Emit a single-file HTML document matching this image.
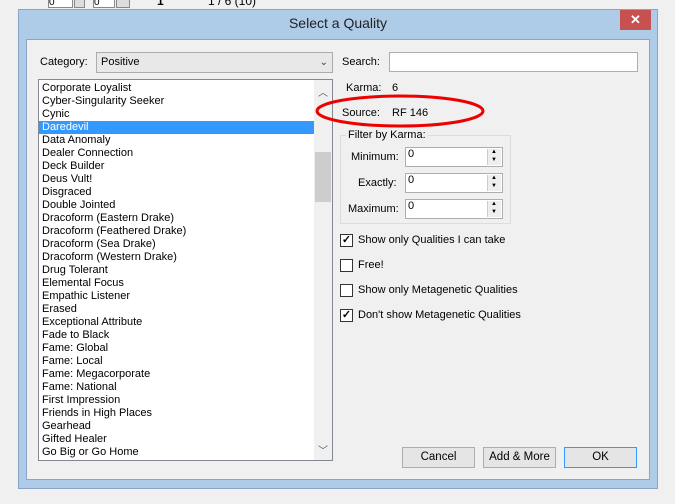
<!DOCTYPE html>
<html><head><style>
*{margin:0;padding:0;box-sizing:border-box}
body{width:675px;height:504px;background:#f0f0f0;font-family:"Liberation Sans",sans-serif;font-size:11px;color:#000;position:relative;overflow:hidden}
.a{position:absolute}
.list div{height:13px;line-height:13px;padding-left:3px;white-space:nowrap;font-size:11px}
.sel{background:#3399ff;color:#fff}
.tb{background:#fff;border:1px solid #abadb3}
.spin{position:absolute;right:1px;top:1px;width:14px;height:16px;background:#eee;border-left:1px solid #ccc}
.spin:before{content:"▲";position:absolute;left:3px;top:0;font-size:6px}
.spin:after{content:"▼";position:absolute;left:3px;top:8px;font-size:6px}
.cb{position:absolute;width:13px;height:13px;border:1px solid #333;background:#fff;font-size:11px;line-height:11px;text-align:center;font-weight:bold}
.btn{position:absolute;height:21px;background:#e5e5e5;border:1px solid #adadad;text-align:center;line-height:19px;font-size:11.5px}
</style></head><body>
<div class="a" style="left:48px;top:0;width:25px;height:8px;background:#fff;border:1px solid #888;border-top:none;font-size:10px;line-height:6px">0</div>
<div class="a" style="left:74px;top:0;width:11px;height:8px;background:#ddd;border:1px solid #888;border-top:none"></div>
<div class="a" style="left:93px;top:0;width:22px;height:8px;background:#fff;border:1px solid #888;border-top:none;font-size:10px;line-height:6px">0</div>
<div class="a" style="left:116px;top:0;width:14px;height:8px;background:#ddd;border:1px solid #888;border-top:none"></div>
<div class="a" style="left:157px;top:-6px;font-weight:bold;font-size:12px">1</div>
<div class="a" style="left:208px;top:-6px;font-size:12px">1 / 6 (10)</div>
<div class="a" style="left:18px;top:9px;width:640px;height:480px;background:#aecbe7;border:1px solid #8aa6c6"></div>
<div class="a" style="left:26px;top:39px;width:624px;height:441px;background:#f0f0f0;border:1px solid #8aa6c6"></div>
<div class="a" style="left:18px;top:15px;width:640px;text-align:center;font-size:14px;color:#222">Select a Quality</div>
<div class="a" style="left:620px;top:10px;width:31px;height:20px;background:#c75050;color:#fff;text-align:center;line-height:19px;font-size:13px;font-weight:bold">✕</div>
<div class="a" style="left:40px;top:56px">Category:</div>
<div class="a" style="left:96px;top:52px;width:237px;height:21px;background:#e8e8e8;border:1px solid #acacac;padding-left:4px;line-height:19px">Positive<span style="position:absolute;right:4px;top:0;font-size:10px;color:#444">⌄</span></div>
<div class="a" style="left:38px;top:79px;width:295px;height:382px;background:#fff;border:1px solid #828790"></div>
<div class="a list" style="left:39px;top:82px;width:276px">
<div>Corporate Loyalist</div><div>Cyber-Singularity Seeker</div><div>Cynic</div><div class="sel">Daredevil</div><div>Data Anomaly</div><div>Dealer Connection</div><div>Deck Builder</div><div>Deus Vult!</div><div>Disgraced</div><div>Double Jointed</div><div>Dracoform (Eastern Drake)</div><div>Dracoform (Feathered Drake)</div><div>Dracoform (Sea Drake)</div><div>Dracoform (Western Drake)</div><div>Drug Tolerant</div><div>Elemental Focus</div><div>Empathic Listener</div><div>Erased</div><div>Exceptional Attribute</div><div>Fade to Black</div><div>Fame: Global</div><div>Fame: Local</div><div>Fame: Megacorporate</div><div>Fame: National</div><div>First Impression</div><div>Friends in High Places</div><div>Gearhead</div><div>Gifted Healer</div><div>Go Big or Go Home</div>
</div>
<div class="a" style="left:314px;top:80px;width:18px;height:380px;background:#f0f0f0"></div>
<div class="a" style="left:315px;top:152px;width:16px;height:50px;background:#cdcdcd"></div>
<div class="a" style="left:318px;top:84px;font-size:10px;color:#555">︿</div>
<div class="a" style="left:318px;top:442px;font-size:10px;color:#555">﹀</div>
<div class="a" style="left:342px;top:56px">Search:</div>
<div class="a tb" style="left:389px;top:52px;width:249px;height:20px"></div>
<div class="a" style="left:346px;top:82px">Karma:</div>
<div class="a" style="left:392px;top:82px">6</div>
<div class="a" style="left:342px;top:107px">Source:</div>
<div class="a" style="left:392px;top:107px">RF 146</div>
<svg class="a" style="left:314px;top:92px" width="175" height="40"><ellipse cx="86" cy="19" rx="83" ry="15" fill="none" stroke="#e00" stroke-width="3"/></svg>
<div class="a" style="left:340px;top:135px;width:171px;height:89px;border:1px solid #dcdcdc"></div>
<div class="a" style="left:346px;top:129px;background:#f0f0f0;padding:0 2px">Filter by Karma:</div>
<div class="a" style="left:351px;top:151px">Minimum:</div>
<div class="a" style="left:358px;top:177px">Exactly:</div>
<div class="a" style="left:348px;top:203px">Maximum:</div>
<div class="a tb" style="left:405px;top:147px;width:98px;height:20px;padding-left:2px">0<div class="spin"></div></div>
<div class="a tb" style="left:405px;top:173px;width:98px;height:20px;padding-left:2px">0<div class="spin"></div></div>
<div class="a tb" style="left:405px;top:199px;width:98px;height:20px;padding-left:2px">0<div class="spin"></div></div>
<div class="cb" style="left:340px;top:234px">✓</div><div class="a" style="left:358px;top:234px">Show only Qualities I can take</div>
<div class="cb" style="left:340px;top:259px"></div><div class="a" style="left:358px;top:259px">Free!</div>
<div class="cb" style="left:340px;top:284px"></div><div class="a" style="left:358px;top:284px">Show only Metagenetic Qualities</div>
<div class="cb" style="left:340px;top:309px">✓</div><div class="a" style="left:358px;top:309px">Don't show Metagenetic Qualities</div>
<div class="btn" style="left:402px;top:447px;width:73px">Cancel</div>
<div class="btn" style="left:483px;top:447px;width:73px">Add &amp; More</div>
<div class="btn" style="left:564px;top:447px;width:73px;border-color:#3399ff">OK</div>
</body></html>
